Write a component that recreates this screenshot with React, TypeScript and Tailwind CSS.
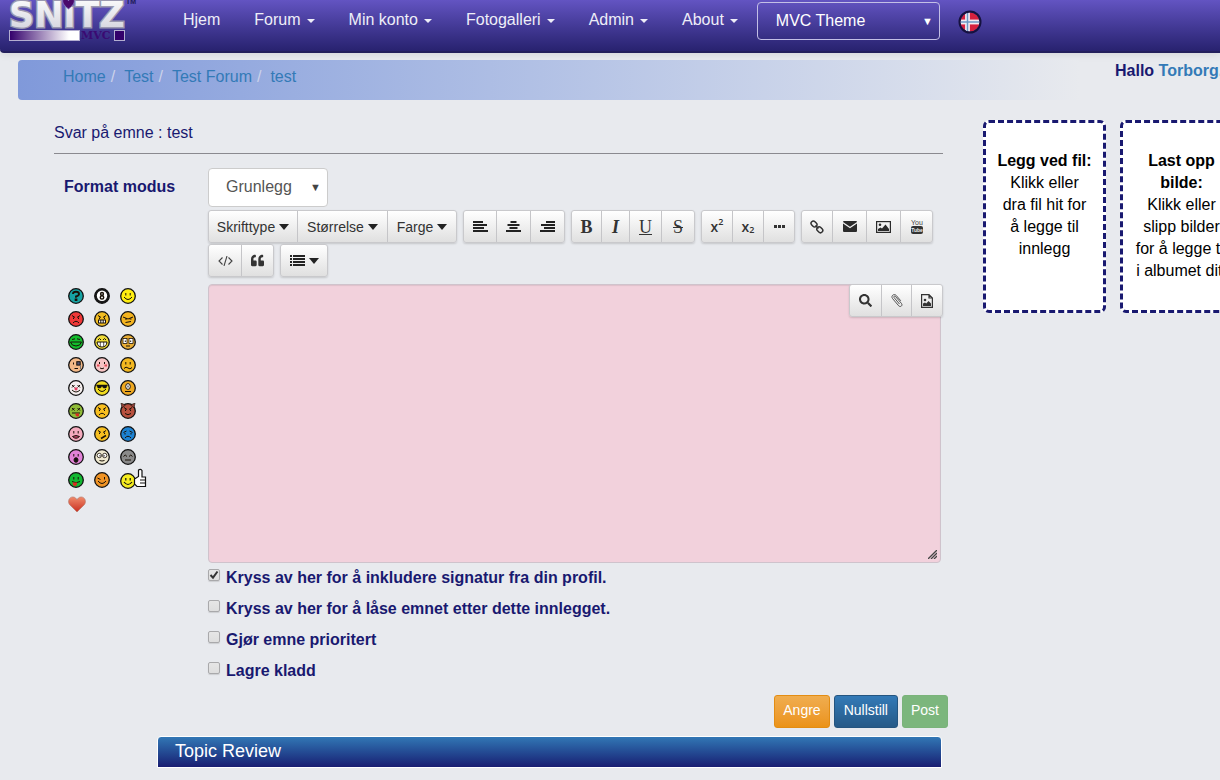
import React from "react";
import { FaQuoteLeft, FaSearch } from "react-icons/fa";

const navItems = [
  { label: "Hjem", menu: false },
  { label: "Forum", menu: true },
  { label: "Min konto", menu: true },
  { label: "Fotogalleri", menu: true },
  { label: "Admin", menu: true },
  { label: "About", menu: true },
];

function Logo() {
  return (
    <svg width="140" height="44" viewBox="0 0 140 44" role="img" aria-label="Snitz MVC">
      <defs>
        <linearGradient id="metal" x1="0" y1="0" x2="0" y2="1">
          <stop offset="0" stopColor="#ffffff" />
          <stop offset="1" stopColor="#cfcfda" />
        </linearGradient>
        <linearGradient id="bar" x1="0" y1="0" x2="1" y2="0">
          <stop offset="0" stopColor="#33006b" />
          <stop offset="0.850" stopColor="#ffffff" />
        </linearGradient>
      </defs>
      <text x="9" y="27" fontFamily="'DejaVu Sans'" fontWeight="700" fontSize="35" fill="url(#metal)" stroke="#9a98b0" strokeWidth="3" paintOrder="stroke">SNıTZ</text>
      <path d="M68.500 9 C63 5 61.500 1 63.500 -1 C66 -3 68 -1 68.500 1 C69 -1 71 -3 73.500 -1 C75.500 1 74 5 68.500 9Z" fill="#4a0a6c" stroke="#8a7cc0" strokeWidth=".8" />
      <text x="126" y="4" fontFamily="'Liberation Sans'" fontWeight="700" fontSize="7" fill="#1d1a55">TM</text>
      <rect x="9.500" y="30.500" width="70" height="10" fill="url(#bar)" stroke="#b3aed0" />
      <text x="81" y="39" fontFamily="'DejaVu Serif'" fontWeight="700" fontSize="11" fill="#3a0a72">MVC</text>
      <rect x="114.500" y="30.500" width="10" height="10" fill="#33006b" stroke="#b3aed0" />
    </svg>
  );
}

function Flag() {
  return (
    <svg width="24" height="24" viewBox="0 0 24 24" aria-hidden="true">
      <clipPath id="disc"><circle cx="12" cy="12" r="9.500" /></clipPath>
      <g clipPath="url(#disc)">
        <rect width="24" height="24" fill="#d5213f" />
        <path d="M9.500 0V24M0 12H24" stroke="#f2c9d6" strokeWidth="5" />
        <path d="M9.500 0V24M0 12H24" stroke="#f4f6fb" strokeWidth="3.600" />
        <path d="M9.500 0V24M0 12H24" stroke="#6d97c4" strokeWidth="1.600" />
      </g>
      <circle cx="12" cy="12" r="10.500" fill="none" stroke="#15123f" strokeWidth="2" />
    </svg>
  );
}

function Lines({ kind }: { kind: "left" | "center" | "right" }) {
  const widths = kind === "left" ? [10, 14, 11, 15] : kind === "center" ? [6, 12, 8, 15] : [9, 14, 11, 15];
  return (
    <svg width="15" height="12" viewBox="0 0 15 12" fill="#222" aria-hidden="true">
      {widths.map((w, i) => {
        const x = kind === "left" ? 0 : kind === "right" ? 15 - w : (15 - w) / 2;
        return <rect key={i} x={x} y={i * 3} width={w} height="2" />;
      })}
    </svg>
  );
}

function ListIcon() {
  return (
    <svg width="15" height="12" viewBox="0 0 15 12" fill="#222" aria-hidden="true">
      {[0, 3, 6, 9].map((y) => (
        <g key={y}><rect y={y} width="2" height="2" /><rect x="3" y={y} width="12" height="2" /></g>
      ))}
    </svg>
  );
}

function Caret() {
  return <span className="h-0 w-0 border-x-[5px] border-t-[6px] border-x-transparent border-t-[#222]" />;
}

function LinkIcon() {
  return (
    <svg width="14" height="14" viewBox="0 0 14 14" fill="none" stroke="#333" strokeWidth="1.500" aria-hidden="true">
      <rect x="-3.200" y="-2.300" width="6.400" height="4.600" rx="2.300" transform="translate(4 4) rotate(45)" />
      <rect x="-3.200" y="-2.300" width="6.400" height="4.600" rx="2.300" transform="translate(9.800 9.800) rotate(45)" />
      <path d="M5.500 5.500L8.500 8.500" />
    </svg>
  );
}

function MailIcon() {
  return (
    <svg width="14" height="11" viewBox="0 0 14 11" fill="#2b2b2b" aria-hidden="true">
      <path d="M0 1Q0 0 1 0H13Q14 0 14 1L7 5.800Z" />
      <path d="M0 2.500L7 7.300L14 2.500V10Q14 11 13 11H1Q0 11 0 10Z" />
    </svg>
  );
}

function PictureIcon() {
  return (
    <svg width="15" height="12" viewBox="0 0 15 12" aria-hidden="true">
      <rect x=".6" y=".6" width="13.800" height="10.800" fill="none" stroke="#2b2b2b" strokeWidth="1.200" />
      <circle cx="4" cy="3.800" r="1.300" fill="#2b2b2b" />
      <path d="M2 10V8L4.500 6.500L6 7.500L9.500 3.500L13 8V10Z" fill="#2b2b2b" />
    </svg>
  );
}

function TubeIcon() {
  return (
    <svg width="14" height="16" viewBox="0 0 14 16" aria-hidden="true">
      <text x="7" y="6" textAnchor="middle" fontFamily="'Liberation Sans Narrow','Liberation Sans'" fontSize="7" fill="#444">You</text>
      <rect x="1" y="7" width="12" height="8" rx="2" fill="#333" />
      <text x="7" y="13" textAnchor="middle" fontFamily="'Liberation Sans Narrow','Liberation Sans'" fontSize="5" fontWeight="700" fill="#eee">Tube</text>
    </svg>
  );
}

function CodeIcon() {
  return (
    <svg width="15" height="10" viewBox="0 0 15 10" fill="none" stroke="#444" strokeWidth="1.100" aria-hidden="true">
      <path d="M4.500 1.500L1 5L4.500 8.500M10.500 1.500L14 5L10.500 8.500M9 0L6 10" />
    </svg>
  );
}

function ClipIcon() {
  return (
    <svg width="12" height="14" viewBox="0 0 12 14" fill="none" stroke="#444" strokeWidth=".9" aria-hidden="true">
      <path d="M8.500 10L3 3.500C2.300 2.600 3.600 1.500 4.400 2.400L10.500 9.500C12 11.600 9.400 13.600 7.700 11.800L1.500 4.500C-.4 2 3-.9 5.200 1.400L9.800 6.800" />
    </svg>
  );
}

function FileImageIcon() {
  return (
    <svg width="12" height="14" viewBox="0 0 12 14" aria-hidden="true">
      <path d="M.6 .6H8L11.400 4V13.400H.6ZM8 .6V4H11.400" fill="none" stroke="#333" strokeWidth="1.200" />
      <circle cx="4" cy="6" r="1.300" fill="#333" />
      <path d="M2 12V9.500L4 8.500L5.200 9.500L7.500 7L10 9.500V12Z" fill="#333" />
    </svg>
  );
}

const smile = <path d="M4 9Q8 14 12 9" fill="none" />;
const dots = <path d="M5.800 5V7.500M10.200 5V7.500" />;
const frown = <path d="M5 12Q8 8.500 11 12" fill="none" />;
const angryBrows = <path d="M4 4.500L7 6.500M12 4.500L9 6.500M5.500 6.500V8M10.500 6.500V8" />;

const faces: { name: string; fill: string; art: React.ReactNode }[] = [
  { name: "Spørsmål", fill: "#16a3a3", art: <><path d="M5 6Q5 3.700 8 3.700Q11 3.700 11 6Q11 7.700 8 8.500V9.700" fill="none" strokeWidth="1.900" /><rect x="7.200" y="11" width="1.700" height="1.500" /></> },
  { name: "Åtteball", fill: "#191919", art: <><circle cx="8" cy="7.700" r="5.200" fill="#fff" stroke="none" /><circle cx="8" cy="5.900" r="1.400" fill="none" strokeWidth="1.500" /><circle cx="8" cy="9.400" r="1.700" fill="none" strokeWidth="1.500" /></> },
  { name: "Smil", fill: "#ffee10", art: <>{dots}{smile}</> },
  { name: "Sint", fill: "#f03838", art: <>{angryBrows}{frown}</> },
  { name: "Rasende", fill: "#f2bd22", art: <>{angryBrows}<rect x="4.500" y="9" width="7" height="3" fill="#fff" /><path d="M6.800 9V12M9.200 9V12" /></> },
  { name: "Sur", fill: "#f4b420", art: <path d="M3 6L8 8L13 6M5 8H7M9.500 8H11.500M5.500 11.500L11 10.500" fill="none" /> },
  { name: "Grønn", fill: "#12bd2c", art: <path d="M4 5.500L7 4.800M9 4.800L12 5.500M2.500 8H13.500Q12.500 12 8 12Q3.500 12 2.500 8" fill="none" /> },
  { name: "Glis", fill: "#eedb38", art: <><path d="M4 6L5.500 4.500L7 6M9 6L10.500 4.500L12 6" fill="none" /><path d="M3 8H13Q12.500 13 8 13Q3.500 13 3 8Z" fill="#fff" /><path d="M6.300 8V12.500M9.700 8V12.500" strokeWidth=".7" /></> },
  { name: "Overrasket", fill: "#e9ae35", art: <><rect x="3" y="4.500" width="4" height="5" fill="#fff" strokeWidth=".8" /><rect x="9" y="4.500" width="4" height="5" fill="#fff" strokeWidth=".8" /><path d="M5.300 6.500V8M10.700 6.500V8M6 12H10" /></> },
  { name: "Monokkel", fill: "#f4b987", art: <><path d="M5.500 5.500V7.500M6.500 11.500H10" /><rect x="8.800" y="4.700" width="3.400" height="3.400" fill="#557" /><path d="M12.500 8V12" stroke="#777" /></> },
  { name: "Flau", fill: "#f7c4c4", art: <><path d="M5.500 5V7M10.500 5V7M6 11Q8 12.500 10 11" fill="none" /><path d="M3 8.500H5.500M10.500 8.500H13" stroke="#e34a56" strokeWidth="2" /></> },
  { name: "Usikker", fill: "#f3b820", art: <>{dots}<path d="M4 11.500Q6 9 8 11Q10 13 12 10.500" fill="none" /></> },
  { name: "Klovn", fill: "#f4eeee", art: <><path d="M4 5L6.500 7.500M6.500 5L4 7.500M9.500 5L12 7.500M12 5L9.500 7.500M4 10Q8 14 12 10" fill="none" /><circle cx="8" cy="8.800" r="1.600" fill="#e13c5f" stroke="none" /></> },
  { name: "Kul", fill: "#f1dc20", art: <><path d="M2.500 5H13.500L12 8H9.500L8 6L6.500 8H4Z" fill="#111" strokeWidth=".5" />{smile}</> },
  { name: "Kyklop", fill: "#efa922", art: <><ellipse cx="8" cy="6.500" rx="2.300" ry="2.900" fill="#fff" /><path d="M8 5.500V7.500M5 11.500H11" /></> },
  { name: "Død", fill: "#8fbb38", art: <><path d="M4 5L6.500 7.500M6.500 5L4 7.500M9.500 5L12 7.500M12 5L9.500 7.500M4 10H12" /><path d="M7.500 10.500H11V13Q9 14.500 7.500 12Z" fill="#d92c22" stroke="none" /></> },
  { name: "Misfornøyd", fill: "#f8bf20", art: <>{angryBrows}{frown}</> },
  { name: "Djevel", fill: "#b8513f", art: <><path d="M1 0L5.500 2L2 5ZM15 0L10.500 2L14 5Z" fill="#8d3f38" strokeWidth=".6" />{angryBrows}<path d="M5 10.500Q8 13 11 10.500" fill="none" /></> },
  { name: "Kyss", fill: "#f4aabd", art: <>{dots}<path d="M4.500 10.500Q8 8.500 11.500 10.500Q8 14 4.500 10.500Z" fill="#c34069" /></> },
  { name: "Lur", fill: "#f6be20", art: <>{angryBrows}<path d="M7 12.500L12 9.500" strokeWidth="1.500" /></> },
  { name: "Trist", fill: "#1d82d2", art: <><path d="M3.500 6.500L6.500 5M12.500 6.500L9.500 5M5 7V8.500M11 7V8.500" />{frown}</> },
  { name: "Sjokkert", fill: "#e282d8", art: <>{dots}<ellipse cx="8" cy="11" rx="2" ry="2.300" fill="#111" /></> },
  { name: "Store øyne", fill: "#efe9d0", art: <><circle cx="5.300" cy="6.500" r="2.200" fill="#fff" strokeWidth=".8" /><circle cx="10.700" cy="6.500" r="2.200" fill="#fff" strokeWidth=".8" /><path d="M6 6V7.500M10 6V7.500M5.500 11.500Q8 12.500 10.500 11.500" fill="none" /></> },
  { name: "Søvnig", fill: "#8a8a8a", art: <path d="M3.500 7.500L5.200 6L7 7.500M9 7.500L10.800 6L12.500 7.500M5 11H11" fill="none" /> },
  { name: "Tunge", fill: "#13b832", art: <>{dots}<path d="M4 9.500Q8 12 12 9.500" fill="none" /><path d="M4.500 10.500H9V12.500Q7 15.500 5 13Z" fill="#d92c22" stroke="none" /></> },
  { name: "Blunk", fill: "#ef9325", art: <><path d="M3.500 6L6.500 7.500M10.500 5V7.500" />{smile}</> },
];

function Face({ fill, children }: { fill: string; children: React.ReactNode }) {
  return (
    <svg width="16" height="16" viewBox="0 0 16 16" aria-hidden="true">
      <circle cx="8" cy="8" r="7.300" fill={fill} stroke="#111" strokeWidth="1.300" />
      <g stroke="#1a1208">{children}</g>
    </svg>
  );
}

function Smileys() {
  return (
    <div className="grid w-[82px] auto-rows-[23px] grid-cols-3 pl-1">
      {faces.map((f) => (
        <button key={f.name} type="button" aria-label={f.name} className="flex h-4 w-4">
          <Face fill={f.fill}>{f.art}</Face>
        </button>
      ))}
      <button type="button" aria-label="Tommel opp" className="-mt-1 flex h-5 w-7">
        <svg width="28" height="21" viewBox="0 0 28 21" className="shrink-0" aria-hidden="true">
          <circle cx="8" cy="13" r="7.300" fill="#f6ed20" stroke="#111" strokeWidth="1.300" />
          <path d="M5.800 10V12.500M10.200 10V12.500M4 14Q8 19 12 14" fill="none" stroke="#111" strokeWidth="1.200" />
          <path d="M18.500 2Q20.500 .5 22 2.500V9H25.500V18.500H17L14.500 16V11L18.500 8.500Z" fill="#fff" stroke="#111" strokeWidth="1.200" />
          <path d="M20 12H25M20 15H25" fill="none" stroke="#111" />
        </svg>
      </button>
      <button type="button" aria-label="Hjerte" className="flex h-4 w-5 pt-px">
        <svg width="18" height="17" viewBox="0 0 18 17" aria-hidden="true">
          <defs><linearGradient id="heart" x1="0" y1="0" x2="0" y2="1"><stop offset="0" stopColor="#f08a6a" /><stop offset="1" stopColor="#c92f20" /></linearGradient></defs>
          <path d="M9 16L1.500 8.500C-.5 5.500 1 1 4.800 1C7 1 8.500 2.500 9 4C9.500 2.500 11 1 13.200 1C17 1 18.500 5.500 16.500 8.500Z" fill="url(#heart)" stroke="#b9786a" strokeWidth=".7" />
        </svg>
      </button>
    </div>
  );
}

function Group({ children }: { children: React.ReactNode }) {
  return (
    <div className="flex divide-x divide-[#c5c5c8] overflow-hidden rounded-[3px] border border-[#c9c9cc] bg-linear-to-b from-white to-[#e0e0e0] shadow-[0_1px_2px_rgba(0,0,0,0.15)]">
      {children}
    </div>
  );
}

function Tool({ label, className, children }: { label: string; className: string; children: React.ReactNode }) {
  return (
    <button type="button" aria-label={label} className={"flex h-[31px] items-center justify-center text-[#333] " + className}>
      {children}
    </button>
  );
}

const checks = [
  { id: "signature", label: "Kryss av her for å inkludere signatur fra din profil.", on: true },
  { id: "lock", label: "Kryss av her for å låse emnet etter dette innlegget.", on: false },
  { id: "sticky", label: "Gjør emne prioritert", on: false },
  { id: "draft", label: "Lagre kladd", on: false },
];

export default function App() {
  return (
    <div className="min-h-screen overflow-x-hidden bg-[#e8eaee] font-['Liberation_Sans',Arial,sans-serif] text-base leading-[22px] text-[#191970]">
      <header className="flex h-[53px] items-start rounded-bl-[4px] border-b-2 border-[#231f5c] bg-linear-to-b from-[#6354c2] to-[#28226f] shadow-[0_1px_8px_rgba(0,0,0,0.1)]">
        <a href="#home" className="mr-[34px] w-[149px] shrink-0"><Logo /></a>
        <nav className="flex shrink-0 gap-[34px] pt-[9px] text-[#eeeef8]">
          {navItems.map((n) => (
            <a key={n.label} href="#nav" className="flex items-center gap-1.5 whitespace-nowrap">
              {n.label}
              {n.menu && <span className="mt-0.5 h-0 w-0 border-x-4 border-t-4 border-x-transparent border-t-[#eeeef8]" />}
            </a>
          ))}
        </nav>
        <div className="relative mt-0.5 ml-[19px] shrink-0">
          <select aria-label="Tema" className="block h-[38px] w-[183px] appearance-none rounded-[4px] border border-[#c3bfe6] bg-transparent pl-[18px] text-white">
            <option>MVC Theme</option>
          </select>
          <span className="pointer-events-none absolute top-2 right-[7px] text-[11px] text-white">▼</span>
        </div>
        <button type="button" aria-label="Norsk" className="mt-2.5 ml-[18px] shrink-0"><Flag /></button>
      </header>

      <div className="flex items-start pt-[7px] pl-[18px]">
        <ol className="flex h-10 flex-1 rounded-[4px] bg-linear-to-r from-[#8099da] to-[#e8eaee] pt-1.5 pl-[45px] text-[#337ab7]">
          {["Home", "Test", "Test Forum", "test"].map((c, i) => (
            <li key={i} className="flex">
              {i > 0 && <span className="pr-[9px] pl-[5px] text-[#ccd3ea]">/</span>}
              <a href="#crumb">{c}</a>
            </li>
          ))}
        </ol>
        <p className="ml-[35px] w-[105px] shrink-0 font-bold whitespace-nowrap">
          Hallo <a href="#profile" className="text-[#337ab7]">Torborg,</a>
        </p>
      </div>

      <div className="flex items-start pt-5 pl-[54px]">
        <main className="min-w-0 flex-1">
          <h1 className="border-b border-[#8a8a8f] pt-0.5 pb-[9px]">Svar på emne : test</h1>
          <form className="pt-3.5" onSubmit={(e) => e.preventDefault()}>
            <div className="flex">
              <div className="w-[154px] shrink-0 pl-2.5">
                <label htmlFor="mode" className="block pt-2 pb-[90px] font-bold">Format modus</label>
                <Smileys />
              </div>
              <div className="min-w-0 flex-1">
                <div className="relative w-[120px]">
                  <select id="mode" className="block h-[39px] w-full appearance-none rounded-[4px] border border-[#ccc] bg-white pr-6 pb-0.5 pl-[17px] text-[#555]">
                    <option>Grunlegg</option>
                  </select>
                  <span className="pointer-events-none absolute top-2 right-[7px] text-[11px] text-[#444]">▼</span>
                </div>

                <div className="flex flex-wrap gap-x-1.5 gap-y-px pt-[3px]">
                  <Group>
                    <Tool label="Skrifttype" className="w-[89px] gap-1 text-sm">Skrifttype <Caret /></Tool>
                    <Tool label="Størrelse" className="w-[90px] gap-1 text-sm">Størrelse <Caret /></Tool>
                    <Tool label="Farge" className="w-[68px] gap-1 text-sm">Farge <Caret /></Tool>
                  </Group>
                  <Group>
                    <Tool label="Venstrejuster" className="w-[33px]"><Lines kind="left" /></Tool>
                    <Tool label="Midtstill" className="w-[34px]"><Lines kind="center" /></Tool>
                    <Tool label="Høyrejuster" className="w-[33px]"><Lines kind="right" /></Tool>
                  </Group>
                  <Group>
                    <Tool label="Fet" className="w-[30px] font-['Liberation_Serif',serif] text-lg font-bold">B</Tool>
                    <Tool label="Kursiv" className="w-[28px] font-['Liberation_Serif',serif] text-lg font-bold italic">I</Tool>
                    <Tool label="Understrek" className="w-[32px] font-['Liberation_Serif',serif] text-lg underline">U</Tool>
                    <Tool label="Gjennomstrek" className="w-[32px] font-['Liberation_Serif',serif] text-lg line-through">S</Tool>
                  </Group>
                  <Group>
                    <Tool label="Hevet" className="w-[31px] font-['Open_Sans',sans-serif] text-sm font-semibold">x<span className="-mt-2 text-[9px]">2</span></Tool>
                    <Tool label="Senket" className="w-[31px] font-['Open_Sans',sans-serif] text-sm font-semibold">x<span className="mt-2 text-[9px]">2</span></Tool>
                    <Tool label="Mer" className="w-[30px] gap-px">
                      <span className="h-[3px] w-[3px] bg-[#333]" /><span className="h-[3px] w-[3px] bg-[#333]" /><span className="h-[3px] w-[3px] bg-[#333]" />
                    </Tool>
                  </Group>
                  <Group>
                    <Tool label="Lenke" className="w-[31px]"><LinkIcon /></Tool>
                    <Tool label="E-post" className="w-[34px]"><MailIcon /></Tool>
                    <Tool label="Bilde" className="w-[34px]"><PictureIcon /></Tool>
                    <Tool label="YouTube" className="w-[31px]"><TubeIcon /></Tool>
                  </Group>
                  <Group>
                    <Tool label="Kode" className="w-[33px]"><CodeIcon /></Tool>
                    <Tool label="Sitat" className="w-[31px]"><FaQuoteLeft size={13} /></Tool>
                  </Group>
                  <Group>
                    <Tool label="Liste" className="w-[46px] gap-1"><ListIcon /><Caret /></Tool>
                  </Group>
                </div>

                <div className="relative mt-[7px] mr-0.5">
                  <textarea aria-label="Melding" className="block h-[279px] w-full resize-none rounded-[4px] border border-[#cfc3cc] bg-[#f2d1dc] p-2 shadow-[inset_0_1px_1px_rgba(0,0,0,0.08)]" />
                  <svg width="9" height="9" viewBox="0 0 9 9" className="pointer-events-none absolute right-1 bottom-1" aria-hidden="true">
                    <path d="M0 9L9 0M3 9L9 3M6 9L9 6" stroke="#444" strokeWidth="1.300" />
                  </svg>
                  <div className="absolute top-0 -right-0.5">
                    <Group>
                      <Tool label="Forhåndsvis" className="w-[32px]"><FaSearch size={13} /></Tool>
                      <Tool label="Legg ved" className="w-[30px]"><ClipIcon /></Tool>
                      <Tool label="Bildefil" className="w-[30px]"><FileImageIcon /></Tool>
                    </Group>
                  </div>
                </div>

                <div className="flex flex-col gap-[9px] pt-1">
                  {checks.map((c) => (
                    <div key={c.id} className="flex items-start gap-1.5">
                      <span className="relative mt-0.5 flex">
                        <input id={c.id} type="checkbox" defaultChecked={c.on} className="peer h-3 w-3 appearance-none rounded-[2px] border border-[#a9a9ab] bg-linear-to-b from-[#e6e6e6] to-[#dedede] shadow-[0_1px_1px_rgba(0,0,0,0.12)]" />
                        <svg width="12" height="12" viewBox="0 0 12 12" className="pointer-events-none absolute inset-0 hidden peer-checked:block" aria-hidden="true">
                          <path d="M2.500 6L5 8.700L9.500 2.500" fill="none" stroke="#333" strokeWidth="2" />
                        </svg>
                      </span>
                      <label htmlFor={c.id} className="font-bold">{c.label}</label>
                    </div>
                  ))}
                </div>
              </div>
            </div>

            <div className="-mr-[5px] flex justify-end gap-1 pt-[13px] text-sm text-white">
              <button type="button" className="h-[33px] rounded-[3px] border border-[#e38d13] bg-linear-to-b from-[#f0ad4e] to-[#eb9316] px-2 pb-[3px]">Angre</button>
              <button type="reset" className="h-[33px] rounded-[3px] border border-[#245580] bg-linear-to-b from-[#337ab7] to-[#265a88] px-[9px] pb-[3px]">Nullstill</button>
              <button type="submit" className="h-[33px] rounded-[3px] border border-[#7ab37a] bg-[#7cb67d] px-2 pb-[3px]">Post</button>
            </div>
          </form>
          <h2 className="mt-2 mr-px ml-[103px] h-8 rounded-t-[4px] border border-white bg-linear-to-b from-[#337ab7] to-[#191970] bg-origin-border pt-0.5 pl-[17px] text-lg leading-6 text-white">
            Topic Review
          </h2>
        </main>

        <aside className="ml-10 flex w-[237px] shrink-0 gap-3.5 text-center text-black">
          <section className="h-[193px] w-[123px] shrink-0 rounded-[6px] border-[3px] border-dashed border-[#191970] bg-white px-3 pt-[27px]">
            <h3 className="-mx-1 font-bold">Legg ved fil:</h3>
            <p>Klikk eller dra fil hit for å legge til innlegg</p>
          </section>
          <section className="h-[193px] w-[123px] shrink-0 rounded-[6px] border-[3px] border-dashed border-[#191970] bg-white px-2.5 pt-[27px]">
            <h3 className="px-3 font-bold">Last opp bilde:</h3>
            <p>Klikk eller slipp bilder for å legge til i albumet ditt</p>
          </section>
        </aside>
      </div>
    </div>
  );
}
